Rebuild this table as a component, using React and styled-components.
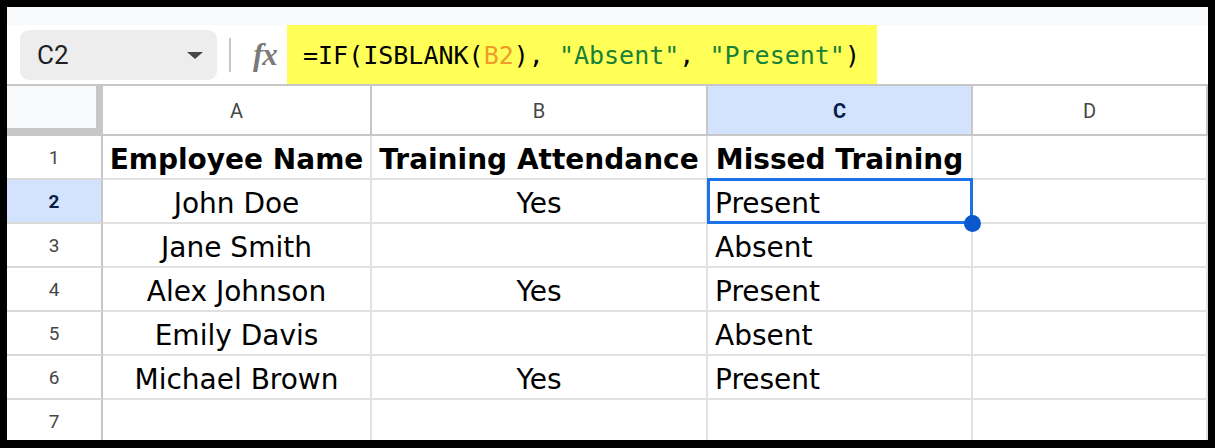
import React from "react";
import styled, { createGlobalStyle } from "styled-components";

const Global = createGlobalStyle`
  html, body { margin: 0; padding: 0; background: #000; }
  body { width: 1215px; height: 448px; overflow: hidden; }
`;

const Frame = styled.div`
  padding: 7px 7px 8px 7px;
  background: #000;
  width: 1215px;
  height: 448px;
  box-sizing: border-box;
`;

const Sheet = styled.div`
  background: #fff;
  height: 433px;
  overflow: hidden;
  display: flex;
  flex-direction: column;
  & > * { flex-shrink: 0; }
`;

const TopStrip = styled.div`
  height: 18px;
  background: #f8f9fa;
`;

const FormulaBar = styled.div`
  height: 59px;
  display: flex;
  align-items: center;
  border-bottom: 2px solid #c7c7c7;
  background: #fff;
`;

const NameBox = styled.div`
  margin-left: 13px;
  width: 197px;
  height: 50px;
  box-sizing: border-box;
  background: #ededed;
  border-radius: 9px;
  display: flex;
  align-items: center;
  justify-content: space-between;
  padding: 0 14px 0 17px;
  font-family: Roboto, "Liberation Sans", sans-serif;
  font-size: 26px;
  color: #1f1f1f;
`;

const Caret = styled.span`
  width: 0;
  height: 0;
  border-left: 8px solid transparent;
  border-right: 8px solid transparent;
  border-top: 7px solid #444746;
  margin-top: 2px;
`;

const Divider = styled.div`
  width: 2px;
  height: 34px;
  background: #c7c7c7;
  margin-left: 12px;
`;

const Fx = styled.span`
  margin-left: 22px;
  width: 34px;
  font-family: "Liberation Serif", serif;
  font-style: italic;
  font-weight: bold;
  font-size: 31px;
  color: #7a7a7a;
  letter-spacing: -1px;
`;

const Formula = styled.div`
  align-self: stretch;
  background: #ffff57;
  width: 590px;
  box-sizing: border-box;
  padding-left: 16px;
  display: flex;
  align-items: center;
  font-family: "DejaVu Sans Mono", "Liberation Mono", monospace;
  font-size: 25px;
  color: #000;
  white-space: pre;
  padding-top: 2px;
`;

const Tok = styled.span`
  color: ${(p) => p.c};
`;

const Grid = styled.div`
  display: grid;
  grid-template-columns: 96px 269px 336px 265px 235px;
  grid-template-rows: 50px repeat(7, 44px);
`;

const Corner = styled.div`
  background: #f8f9fa;
  border-right: 7px solid #c7c7c7;
  border-bottom: 8px solid #c7c7c7;
  box-sizing: border-box;
`;

const ColHead = styled.div`
  box-sizing: border-box;
  border-right: 2px solid #c7c7c7;
  border-bottom: 2px solid #c7c7c7;
  background: ${(p) => (p.sel ? "#d3e3fd" : "#fff")};
  color: ${(p) => (p.sel ? "#041e49" : "#444746")};
  font-weight: ${(p) => (p.sel ? "bold" : "normal")};
  font-family: Roboto, "Liberation Sans", sans-serif;
  font-size: 20px;
  display: flex;
  align-items: center;
  justify-content: center;
  padding-top: 2px;
`;

const RowHead = styled.div`
  box-sizing: border-box;
  border-right: 2px solid #c7c7c7;
  border-bottom: 2px solid #d9d9d9;
  background: ${(p) => (p.sel ? "#d3e3fd" : "#fff")};
  color: ${(p) => (p.sel ? "#041e49" : "#444746")};
  font-weight: ${(p) => (p.sel ? "bold" : "normal")};
  font-family: Roboto, "Liberation Sans", sans-serif;
  font-size: 19px;
  display: flex;
  align-items: center;
  justify-content: center;
`;

const Cell = styled.div`
  position: relative;
  box-sizing: border-box;
  border-right: 2px solid #e1e1e1;
  border-bottom: 2px solid #e1e1e1;
  font-family: "DejaVu Sans", Verdana, sans-serif;
  font-size: 28px;
  font-weight: ${(p) => (p.bold ? "bold" : "normal")};
  color: #000;
  display: flex;
  align-items: center;
  justify-content: ${(p) => (p.center ? "center" : "flex-start")};
  padding-left: ${(p) => (p.center ? "0" : "7px")};
  white-space: nowrap;
  padding-top: 5px;
`;

const Selection = styled.div`
  position: absolute;
  left: -1px;
  top: -2px;
  right: -2px;
  bottom: -2px;
  border: 3px solid #1a73e8;
  pointer-events: none;
`;

const Handle = styled.div`
  position: absolute;
  right: -10px;
  bottom: -10px;
  width: 17px;
  height: 17px;
  border-radius: 50%;
  background: #0b57d0;
  z-index: 2;
`;

const rows = [
  ["Employee Name", "Training Attendance", "Missed Training"],
  ["John Doe", "Yes", "Present"],
  ["Jane Smith", "", "Absent"],
  ["Alex Johnson", "Yes", "Present"],
  ["Emily Davis", "", "Absent"],
  ["Michael Brown", "Yes", "Present"],
  ["", "", ""],
];

export default function App() {
  return (
    <Frame>
      <Global />
      <Sheet>
        <TopStrip />
        <FormulaBar>
          <NameBox>
            C2
            <Caret />
          </NameBox>
          <Divider />
          <Fx>fx</Fx>
          <Formula>
            =IF(ISBLANK(<Tok c="#f09a2a">B2</Tok>), <Tok c="#188038">"Absent"</Tok>,{" "}
            <Tok c="#188038">"Present"</Tok>)
          </Formula>
        </FormulaBar>
        <Grid>
          <Corner />
          <ColHead>A</ColHead>
          <ColHead>B</ColHead>
          <ColHead sel>C</ColHead>
          <ColHead>D</ColHead>
          {rows.map((r, i) => (
            <React.Fragment key={i}>
              <RowHead sel={i === 1}>{i + 1}</RowHead>
              <Cell center bold={i === 0}>{r[0]}</Cell>
              <Cell center bold={i === 0}>{r[1]}</Cell>
              <Cell center={i === 0} bold={i === 0}>
                {r[2]}
                {i === 1 && (
                  <>
                    <Selection />
                    <Handle />
                  </>
                )}
              </Cell>
              <Cell />
            </React.Fragment>
          ))}
        </Grid>
      </Sheet>
    </Frame>
  );
}
